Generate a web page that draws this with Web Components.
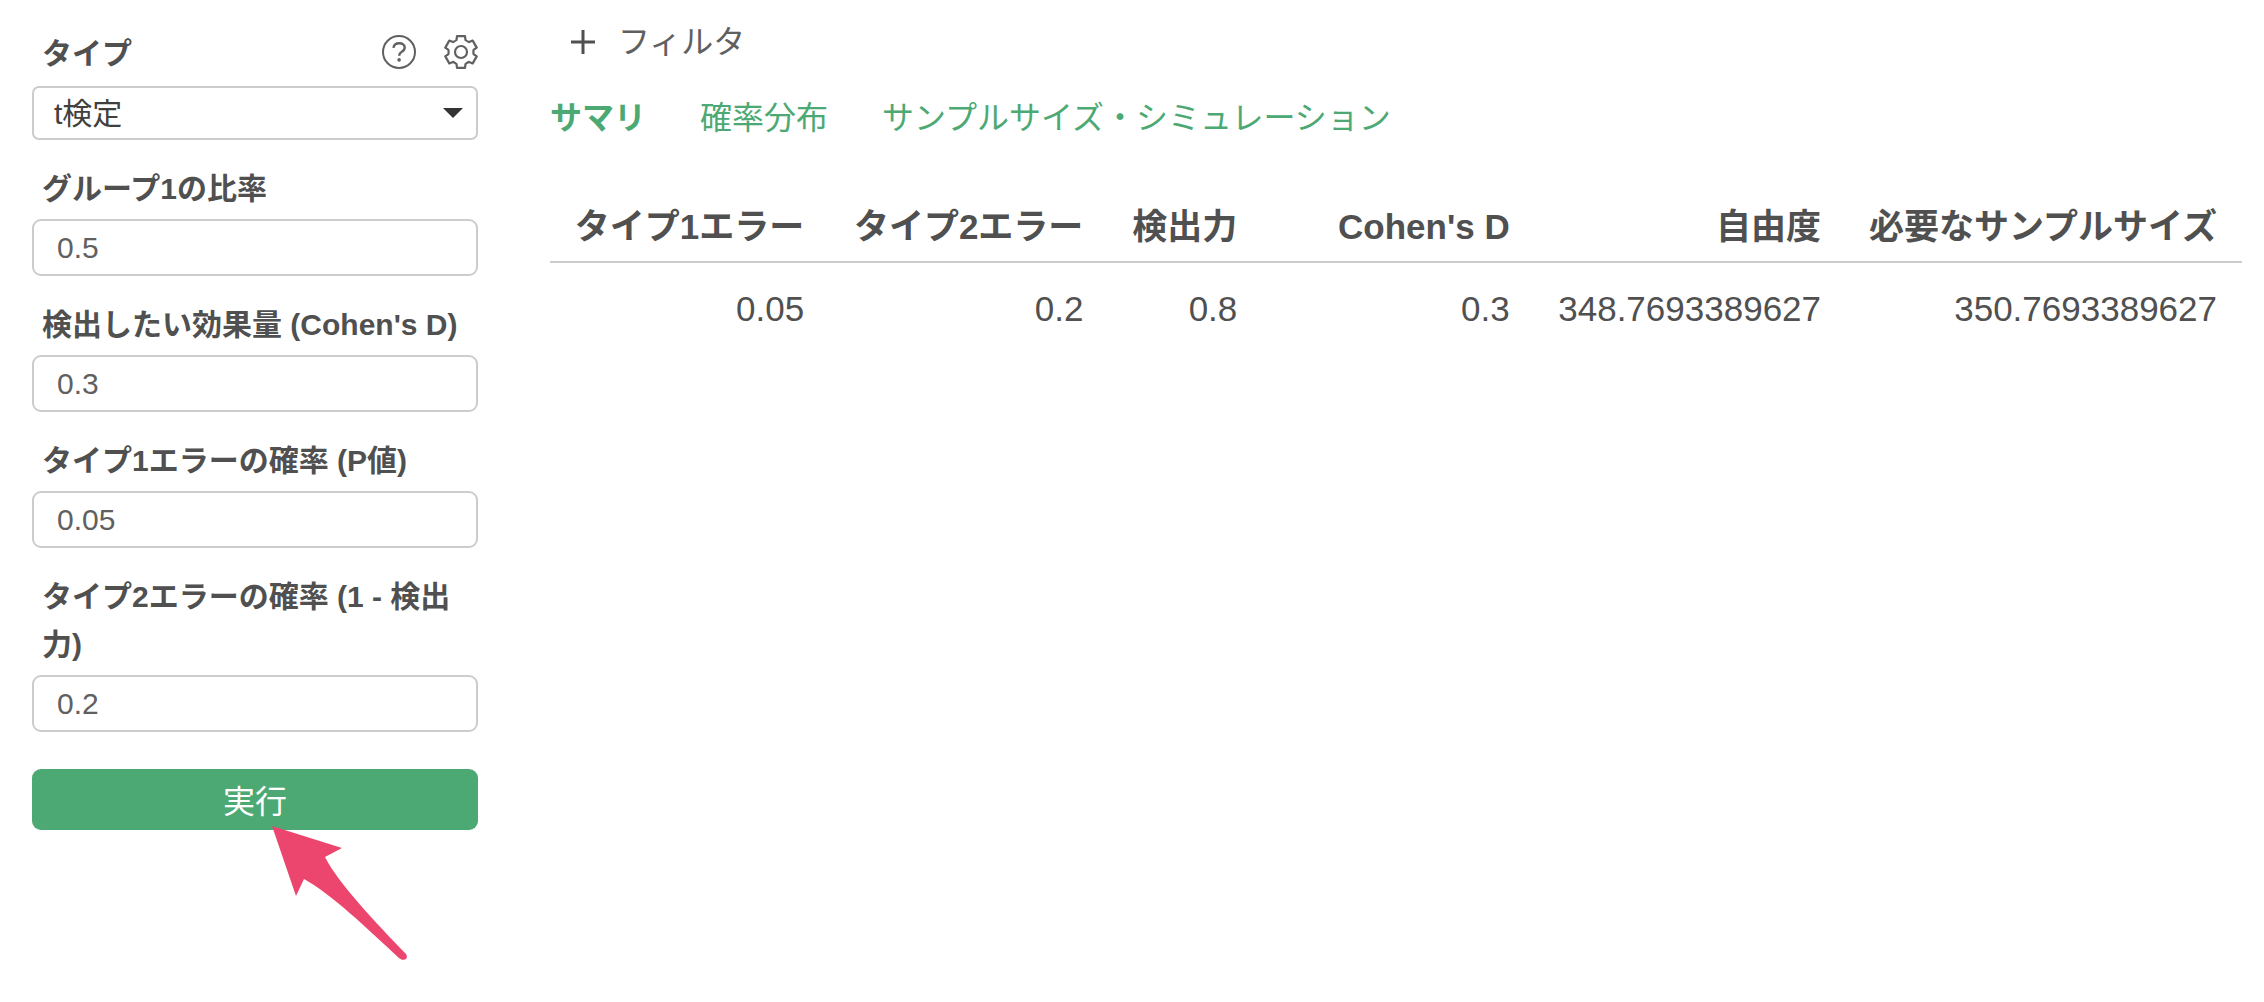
<!DOCTYPE html>
<html lang="ja">
<head>
<meta charset="utf-8">
<title>検出力分析</title>
<style>
  body {
    margin: 0;
    background: #fff;
    color: #505050;
    font-family: "Liberation Sans", "Noto Sans CJK JP", sans-serif;
    font-size: 30px;
  }
</style>
</head>
<body>
<power-app></power-app>
<script>
  function define(name, html) {
    const template = document.createElement('template');
    template.innerHTML = '<style>*{box-sizing:border-box}</style>' + html;
    customElements.define(name, class extends HTMLElement {
      constructor() {
        super();
        this.attachShadow({ mode: 'open' }).append(template.content.cloneNode(true));
      }
      connectedCallback() {
        const root = this.shadowRoot;
        const label = root.querySelector('[data-label]');
        if (label) label.textContent = this.getAttribute('label');
        const input = root.querySelector('input');
        if (input) input.value = this.getAttribute('value');
      }
    });
  }

  define('number-field', `
    <style>
      :host { display: flex; flex-direction: column; gap: 6px; }
      label { padding: 0 10px; font-weight: bold; line-height: 48px; }
      input {
        width: 100%; height: 57px; padding: 0 23px; border: 2px solid #ccc; border-radius: 9px;
        background: #fff; color: #606060; font: inherit;
      }
    </style>
    <label for="field" data-label></label>
    <input id="field" type="text" inputmode="decimal">`);

  define('type-picker', `
    <style>
      :host { display: flex; flex-direction: column; gap: 8px; }
      .head { display: flex; align-items: flex-start; gap: 28px; padding-left: 10px; }
      label { flex: 1; font-weight: bold; line-height: 48px; }
      button { display: flex; padding: 5px 0; border: 0; background: none; color: #606060; }
      svg { display: block; }
      .box { display: grid; align-items: center; }
      .box > * { grid-area: 1 / 1; }
      select {
        appearance: none; width: 100%; height: 54px; padding: 0 20px; border: 2px solid #ccc;
        border-radius: 7px; background: #fff; color: #404040; font: inherit;
      }
      .caret { justify-self: end; margin-right: 15px; pointer-events: none; }
    </style>
    <div class="head">
      <label for="type">タイプ</label>
      <button type="button" aria-label="ヘルプ">
        <svg width="34" height="34" viewBox="0 0 34 34" fill="none" stroke="currentColor" stroke-width="2">
          <circle cx="17" cy="17" r="16"/>
          <path d="M11.5 12.8C11.8 9.8 14 8.3 17.3 8.3c3.2 0 5.4 1.7 5.4 4.2 0 2-1 3.1-2.9 4.3-2 1.2-2.6 2-2.6 3.9" stroke-width="2.4"/>
          <circle cx="17.1" cy="24.9" r="1.8" fill="currentColor" stroke="none"/>
        </svg>
      </button>
      <button type="button" aria-label="設定">
        <svg width="34" height="34" viewBox="0 0 34 34" fill="none" stroke="currentColor" stroke-width="2.2" stroke-linejoin="round">
          <path d="M13 1.2h8l.5 3.8q1.8 1.4 3.6 2.1l3.6-1.5 4 7-3.1 2.3q-.4 2.1 0 4.2l3.1 2.3-4 7-3.6-1.5q-1.800.7-3.600 2.100l-.5 3.800h-8l-.5-3.800q-1.800-1.400-3.600-2.100l-3.600 1.500-4-7 3.100-2.300q.4-2.100 0-4.200L1.300 12.600l4-7 3.600 1.500q1.800-.7 3.600-2.100z"/>
          <circle cx="17" cy="17" r="6"/>
        </svg>
      </button>
    </div>
    <div class="box">
      <select id="type"><option>t検定</option></select>
      <svg class="caret" width="20" height="10" viewBox="0 0 20 10"><path d="M0 0h20L10 10z" fill="#333"/></svg>
    </div>`);

  define('run-button', `
    <style>
      :host { display: grid; }
      button {
        height: 61px; padding: 0 0 2px; border: 0; border-radius: 9px;
        background: #4ca973; color: #fff; font: inherit; font-size: 32px;
      }
      /* The pointer lies over the lower edge of the button. */
      svg { position: absolute; left: 272px; top: 826px; }
    </style>
    <button type="button"><slot></slot></button>
    <svg width="136" height="136" viewBox="0 0 136 136" aria-hidden="true">
      <path d="M0 0 70 22 53 31C66 57 105 98 134 128 137 133 132 136 127 132 96 103 58 67 32 53L24 70Z" fill="#ec466e"/>
    </svg>`);

  define('filter-button', `
    <style>
      :host { display: flex; }
      button {
        display: flex; align-items: center; gap: 22px; padding: 0; border: 0; background: none;
        color: #606060; font: inherit; font-size: 32px; line-height: 48px;
      }
    </style>
    <button type="button">
      <svg width="26" height="26" viewBox="0 0 26 26" stroke="#505050" stroke-width="3"><path d="M1 13h24M13 1v24"/></svg>
      <slot></slot>
    </button>`);

  define('view-tabs', `
    <style>
      :host { display: block; }
      nav { display: flex; gap: 54px; font-size: 32px; line-height: 48px; }
      a { color: #4ca973; text-decoration: none; white-space: nowrap; }
      a[aria-current] { font-weight: bold; }
    </style>
    <nav>
      <a href="#summary" aria-current="page">サマリ</a>
      <a href="#distribution">確率分布</a>
      <a href="#simulation">サンプルサイズ・シミュレーション</a>
    </nav>`);

  define('summary-table', `
    <style>
      :host { display: block; }
      table { width: 100%; table-layout: fixed; border-collapse: collapse; font-size: 35px; line-height: 52px; }
      th, td { padding: 0 25px 0 0; text-align: right; white-space: nowrap; }
      th { padding-bottom: 8px; border-bottom: 2px solid #ccc; }
      td { padding-top: 20px; }
      .wide { width: 16.5%; }
      .narrow { width: 9.1%; }
      .effect { width: 16.1%; }
      .freedom { width: 18.4%; }
    </style>
    <table>
      <colgroup>
        <col class="wide"><col class="wide"><col class="narrow"><col class="effect"><col class="freedom"><col>
      </colgroup>
      <thead><tr><th>タイプ1エラー</th><th>タイプ2エラー</th><th>検出力</th><th>Cohen's D</th><th>自由度</th><th>必要なサンプルサイズ</th></tr></thead>
      <tbody><tr><td>0.05</td><td>0.2</td><td>0.8</td><td>0.3</td><td>348.7693389627</td><td>350.7693389627</td></tr></tbody>
    </table>`);

  define('power-app', `
    <style>
      :host { display: flex; gap: 72px; padding: 0 22px 0 32px; }
      form { flex: 0 0 446px; display: flex; flex-direction: column; gap: 25px; padding-top: 30px; }
      run-button { margin-top: 12px; }
      main { flex: 1; min-width: 0; padding-top: 18px; }
      filter-button { padding-left: 20px; }
      view-tabs { padding-top: 28px; }
      summary-table { padding-top: 59px; }
    </style>
    <form>
      <type-picker></type-picker>
      <number-field label="グループ1の比率" value="0.5"></number-field>
      <number-field label="検出したい効果量 (Cohen's D)" value="0.3"></number-field>
      <number-field label="タイプ1エラーの確率 (P値)" value="0.05"></number-field>
      <number-field label="タイプ2エラーの確率 (1 - 検出力)" value="0.2"></number-field>
      <run-button>実行</run-button>
    </form>
    <main>
      <filter-button>フィルタ</filter-button>
      <view-tabs></view-tabs>
      <summary-table></summary-table>
    </main>`);
</script>
</body>
</html>
